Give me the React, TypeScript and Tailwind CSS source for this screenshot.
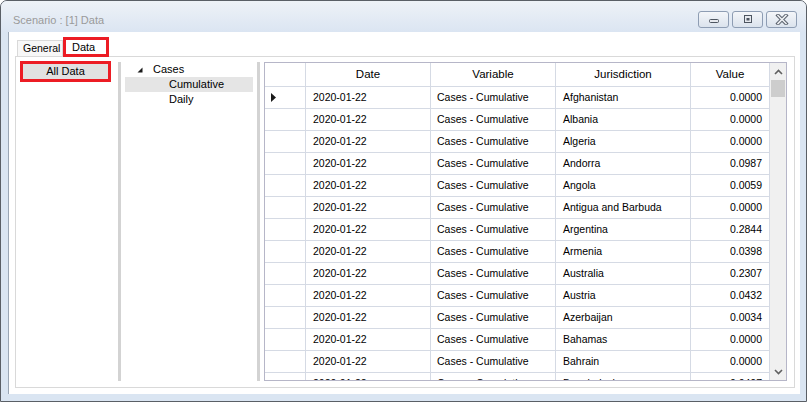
import React from "react"

const rows = [
  ["Afghanistan", "0.0000"],
  ["Albania", "0.0000"],
  ["Algeria", "0.0000"],
  ["Andorra", "0.0987"],
  ["Angola", "0.0059"],
  ["Antigua and Barbuda", "0.0000"],
  ["Argentina", "0.2844"],
  ["Armenia", "0.0398"],
  ["Australia", "0.2307"],
  ["Austria", "0.0432"],
  ["Azerbaijan", "0.0034"],
  ["Bahamas", "0.0000"],
  ["Bahrain", "0.0000"],
  ["Bangladesh", "0.0407"],
]

const CaptionButton = ({ kind }: { kind: string }) => (
  <div className="w-[31px] h-[17px] rounded-[3px] border border-[#8e9db3] bg-gradient-to-b from-[#f4f6f9] to-[#dbe3ed] flex items-center justify-center">
    <svg width="14" height="11" viewBox="0 0 14 11">
      {kind === "min" && (
        <rect x="2.5" y="5.5" width="9" height="3" rx="1" fill="#e6e9ee" stroke="#4d5560" />
      )}
      {kind === "max" && (
        <>
          <rect x="3.5" y="1.5" width="7" height="7" fill="#e6e9ee" stroke="#4d5560" />
          <rect x="5.5" y="4" width="3" height="2.5" fill="#4d5560" />
        </>
      )}
      {kind === "close" && (
        <>
          <path d="M3 1.5 L11 9.5 M11 1.5 L3 9.5" stroke="#59616c" strokeWidth="3.6" strokeLinecap="square" />
          <path d="M3 1.5 L11 9.5 M11 1.5 L3 9.5" stroke="#eef0f3" strokeWidth="1.6" strokeLinecap="square" />
        </>
      )}
    </svg>
  </div>
)

const Chevron = ({ up }: { up?: boolean }) => (
  <svg width="9" height="6" viewBox="0 0 9 6">
    <path
      d={up ? "M1 5 L4.5 1.5 L8 5" : "M1 1 L4.5 4.5 L8 1"}
      stroke="#606060"
      strokeWidth="1.6"
      fill="none"
    />
  </svg>
)

export default function App() {
  return (
    <div className="w-[807px] h-[402px] rounded-t-[7px] border border-[#5a5f66] bg-[#dae5f2] flex flex-col font-['Liberation_Sans',Arial,sans-serif] text-black overflow-hidden">
      {/* title bar */}
      <div className="h-[31px] shrink-0 flex items-start justify-between bg-gradient-to-b from-[#eef2f7] to-[#dbe5f2] pl-[12px] pr-[9px]">
        <span className="mt-[12px] text-[11px] leading-[14px] text-[#9a9a9a]">Scenario : [1] Data</span>
        <div className="mt-[10px] flex gap-[3px]">
          <CaptionButton kind="min" />
          <CaptionButton kind="max" />
          <CaptionButton kind="close" />
        </div>
      </div>

      {/* client area */}
      <div className="flex-1 min-h-0 ml-[7px] mr-[6px] mb-[7px] bg-white border-l border-[#9aa6b5] pl-[6px] pr-[5px] pt-[3px] pb-[6px] flex flex-col">
        {/* tab headers */}
        <div className="h-[21px] shrink-0 flex items-end pl-[2px] relative z-10">
          <div className="h-[16px] w-[46px] border border-b-0 border-[#d9d9d9] bg-[#f7f7f7] text-[10.5px] leading-[14px] pl-[5px] text-black">
            General
          </div>
          <div className="h-[20px] -mb-px w-[46px] border-[3px] border-[#ec1c24] bg-white text-[11px] leading-[14px] pl-[6px]">
            Data
          </div>
        </div>

        {/* tab page */}
        <div className="flex-1 min-h-0 border border-[#d9d9d9] pt-[5px] pb-[6px] pl-[1px] pr-[5px] flex">
          {/* left list */}
          <div className="w-[101px] pl-[3px]">
            <div className="-mt-px w-[91px] h-[21px] border-[3px] border-[#ec1c24] bg-[#e1e1e1] text-[11px] leading-[15px] text-center">
              All Data
            </div>
          </div>
          <div className="w-[3px] bg-[#d3d3d3]" />

          {/* tree */}
          <div className="w-[136px] pl-[4px] pr-[4px] text-[11px]">
            <div className="h-[15px] flex items-center">
              <svg width="6" height="6" viewBox="0 0 6 6" className="ml-[12px] mt-[1px]">
                <path d="M5.5 0.5 L5.5 5.5 L0.5 5.5 Z" fill="#1a1a1a" />
              </svg>
              <span className="ml-[10px] leading-[15px]">Cases</span>
            </div>
            <div className="h-[15px] bg-[#e5e5e5] pl-[44px] leading-[15px]">Cumulative</div>
            <div className="h-[15px] pl-[44px] leading-[15px]">Daily</div>
          </div>
          <div className="w-[3px] bg-[#d3d3d3]" />

          {/* grid */}
          <div className="ml-[4px] w-[523px] min-h-0 border border-[#b6b6c8] flex overflow-hidden">
            <div className="w-[505px] min-h-0 flex flex-col overflow-hidden text-[10.5px]">
              <div className="h-[24px] shrink-0 flex border-b border-[#d5dae4] text-[11.5px]">
                <div className="w-[41px] border-r border-[#d5dae4]" />
                <div className="w-[125px] border-r border-[#d5dae4] flex items-center justify-center">Date</div>
                <div className="w-[125px] border-r border-[#d5dae4] flex items-center justify-center">Variable</div>
                <div className="w-[135px] border-r border-[#d5dae4] flex items-center justify-center">Jurisdiction</div>
                <div className="w-[79px] border-r border-[#d5dae4] flex items-center justify-center">Value</div>
              </div>
              {rows.map(([j, v], i) => (
                <div key={j} className="h-[22px] shrink-0 flex border-b border-[#d5dae4]">
                  <div className="w-[41px] border-r border-[#d5dae4] flex items-center pl-[6px]">
                    {i === 0 && (
                      <svg width="5" height="9" viewBox="0 0 5 9">
                        <path d="M0 0 L5 4.5 L0 9 Z" fill="#1a1a1a" />
                      </svg>
                    )}
                  </div>
                  <div className="w-[125px] border-r border-[#d5dae4] flex items-center pl-[7px]">2020-01-22</div>
                  <div className="w-[125px] border-r border-[#d5dae4] flex items-center pl-[6px]">Cases - Cumulative</div>
                  <div className="w-[135px] border-r border-[#d5dae4] flex items-center pl-[7px]">{j}</div>
                  <div className="w-[79px] border-r border-[#d5dae4] flex items-center justify-end pr-[7px]">{v}</div>
                </div>
              ))}
            </div>
            {/* scrollbar */}
            <div className="w-[16px] bg-[#f0f0f0] flex flex-col items-center">
              <div className="h-[17px] w-full flex items-center justify-center">
                <Chevron up />
              </div>
              <div className="w-[14px] h-[17px] bg-[#cdcdcd]" />
              <div className="flex-1" />
              <div className="h-[17px] w-full flex items-center justify-center">
                <Chevron />
              </div>
            </div>
          </div>
        </div>
      </div>
    </div>
  )
}
